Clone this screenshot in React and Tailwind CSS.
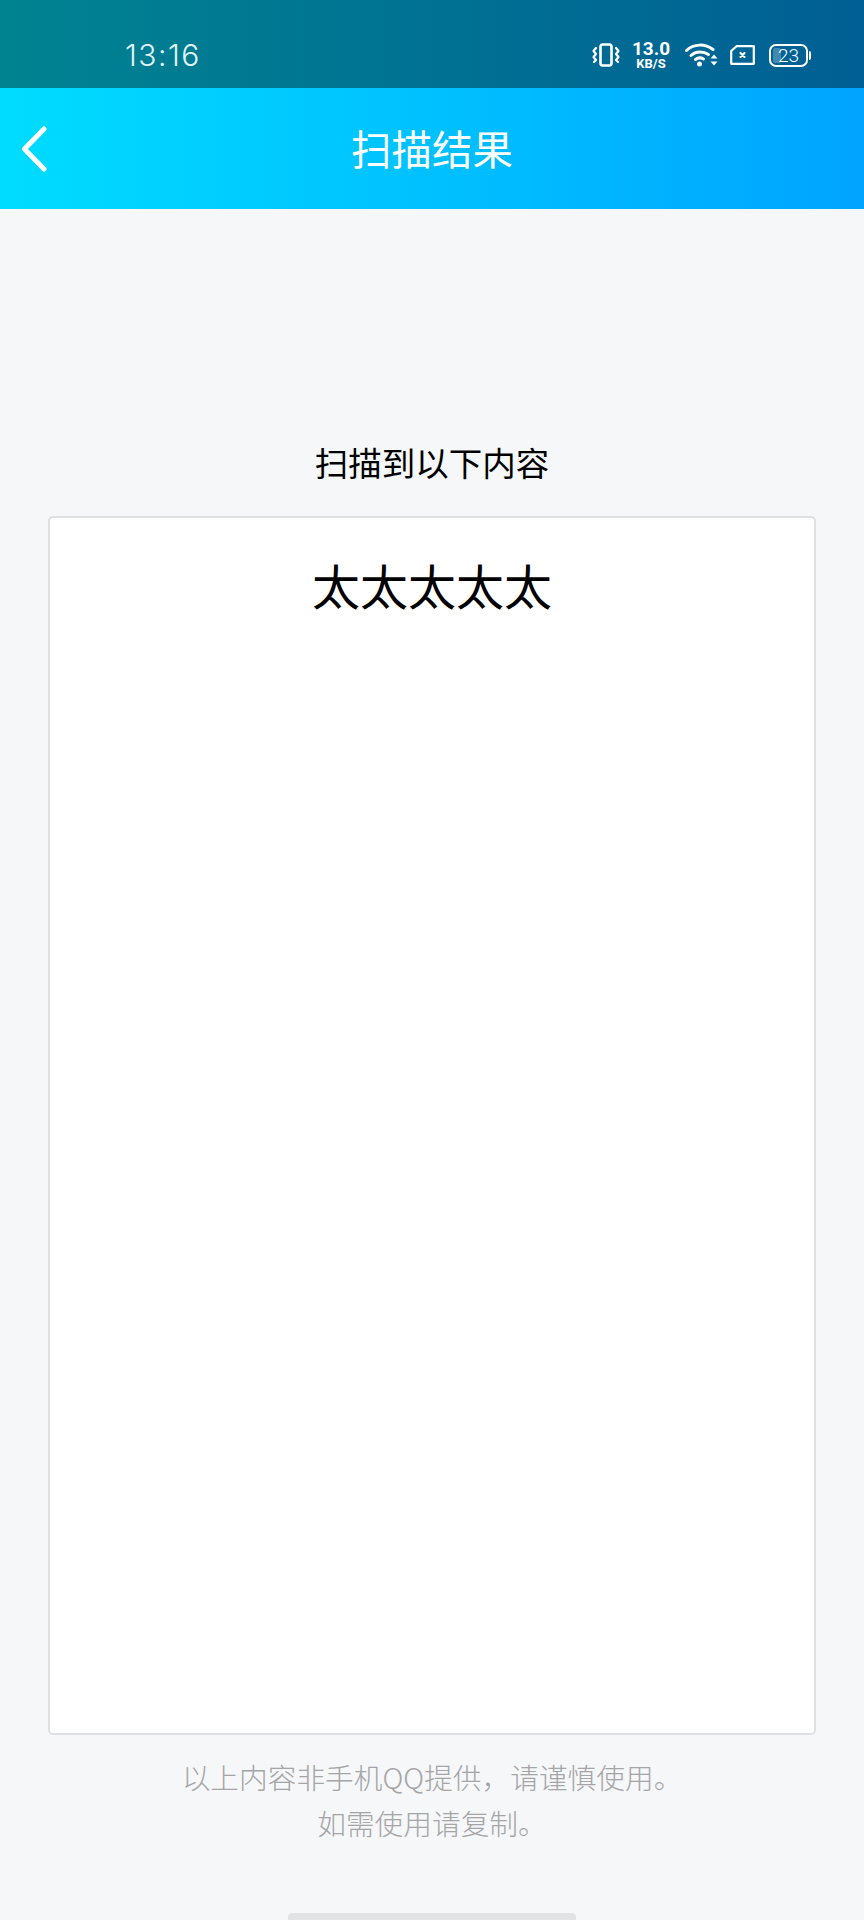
const cjk = { fontFamily: '"Noto Sans CJK SC", "Noto Sans", sans-serif' };

function VibrateIcon() {
  return (
    <svg width="28" height="24" viewBox="0 0 28 24" fill="none" stroke="white" strokeLinecap="round" strokeLinejoin="round">
      <rect x="8.5" y="1.5" width="11" height="21" rx="2.2" strokeWidth="2.6" />
      <path d="M4 5 L1.5 8 L4 11 L1.5 14 L4 17 L2 19" strokeWidth="2.2" />
      <path d="M24 5 L26.5 8 L24 11 L26.5 14 L24 17 L26 19" strokeWidth="2.2" />
    </svg>
  );
}

function WifiIcon() {
  return (
    <svg width="34" height="24" viewBox="0 0 34 24" fill="none" stroke="white" strokeLinecap="round">
      <path d="M1.5 7.5 C9 0.5 20 0.5 28 6.5" strokeWidth="3" />
      <path d="M6 12.5 C11 8 18 8 23.5 11.5" strokeWidth="3" />
      <path d="M10.5 16.5 C13 14.5 16 14.5 18.5 16" strokeWidth="3" />
      <circle cx="14.5" cy="21" r="2.5" fill="white" stroke="none" />
      <path d="M25.5 15.5 L29 11.5 L32.5 15.5 Z" fill="white" stroke="none" />
      <path d="M25.5 18.5 L29 22.5 L32.5 18.5 Z" fill="white" stroke="none" />
    </svg>
  );
}

function SimIcon() {
  return (
    <svg width="25" height="20" viewBox="0 0 25 20" fill="none" stroke="white" strokeLinecap="round" strokeLinejoin="round">
      <path d="M6.5 1.2 H23.8 V18.8 H1.2 V6 Z" strokeWidth="2.2" />
      <path d="M10.5 8 L14.5 12 M14.5 8 L10.5 12" strokeWidth="2.2" />
    </svg>
  );
}

function BackIcon() {
  return (
    <svg width="26" height="46" viewBox="0 0 26 46" fill="none" stroke="white" strokeWidth="5" strokeLinecap="round" strokeLinejoin="round">
      <path d="M23 3 L3.5 23 L23 43" />
    </svg>
  );
}

export default function App() {
  return (
    <div className="flex h-[1920px] w-[864px] flex-col overflow-hidden bg-[#f6f7f9]" style={cjk}>
      {/* Status bar */}
      <div className="flex h-[88px] w-full shrink-0 items-center bg-gradient-to-r from-[#008391] to-[#005f94] pl-[125px] pr-[56px] pt-[22px] text-white">
        <span className="text-[30px] font-light leading-none tracking-[1.5px] text-[#e4f4f6]" style={{ fontFamily: 'Inter, sans-serif' }}>
          13:16
        </span>
        <div className="ml-auto flex items-center">
          <VibrateIcon />
          <div className="ml-[12px] flex w-[38px] flex-col items-center leading-none" style={{ fontFamily: 'Roboto, sans-serif' }}>
            <span className="text-[19px] font-bold leading-[18px]">13.0</span>
            <span className="text-[13px] font-bold leading-[12px]">KB/S</span>
          </div>
          <div className="ml-[15px]"><WifiIcon /></div>
          <div className="ml-[11px]"><SimIcon /></div>
          <div className="relative ml-[14px] flex h-[23px] w-[39px] items-center justify-center rounded-[7px] border-2 border-white">
            <div className="absolute inset-y-[2px] left-[2px] w-[8px] rounded-[2px] bg-white/25" />
            <span className="relative text-[19px] font-light leading-none" style={{ fontFamily: 'Roboto, sans-serif' }}>23</span>
            <div className="absolute right-[-5px] h-[9px] w-[2px] rounded-r-sm bg-white" />
          </div>
        </div>
      </div>

      {/* Title bar */}
      <div className="relative flex h-[121px] w-full shrink-0 items-center justify-center bg-gradient-to-r from-[#00dcff] to-[#00a4ff]">
        <div className="absolute left-[21px] top-[38px]"><BackIcon /></div>
        <span className="text-[40.5px] font-normal leading-none text-white">扫描结果</span>
      </div>

      {/* Scan result */}
      <div className="flex flex-1 flex-col items-center">
        <p className="mt-[230px] text-[33.5px] font-normal leading-[46px] text-black">扫描到以下内容</p>
        <div className="mt-[31px] flex h-[1219px] w-[768px] justify-center rounded-[5px] border-2 border-[#dfe0e2] bg-white">
          <span className="mt-[32px] text-[48px] font-normal leading-[68px] text-black">太太太太太</span>
        </div>
        <div className="mt-[19px] text-center text-[28.7px] font-light leading-[46px] text-[#a5a5a7]">
          <p>{'以上内容非手机QQ提供\uFF0C请谨慎使用。'}</p>
          <p>如需使用请复制。</p>
        </div>
        <div className="mt-auto h-[7px] w-[288px] rounded-t-[4px] bg-[#e2e3e5]" />
      </div>
    </div>
  );
}
